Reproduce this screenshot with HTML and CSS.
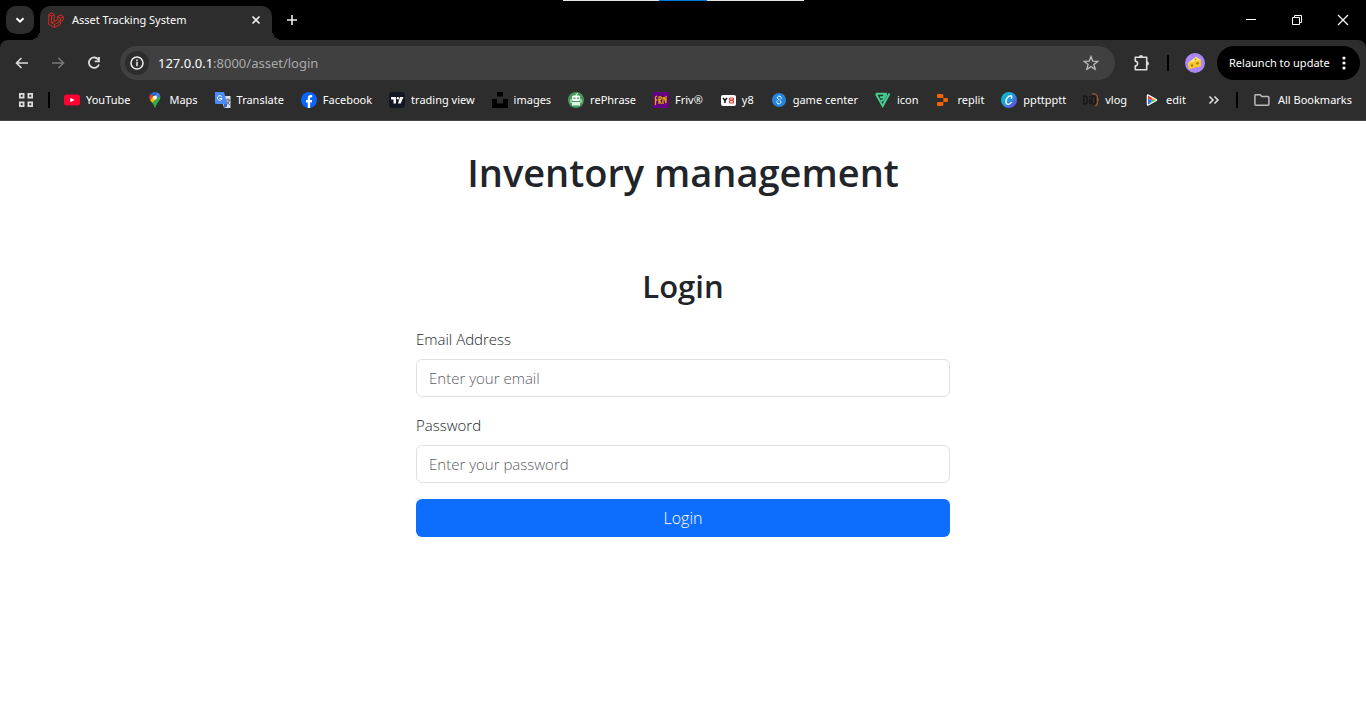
FILE: index.html
```html
<!DOCTYPE html>
<html lang="en">
<head>
<meta charset="utf-8">
<title>Asset Tracking System</title>
<link rel="stylesheet" href="styles.css">
</head>
<body>
<header class="browser">
  <div class="share-bar"></div>
  <div class="tab-strip">
    <button class="tab-search" aria-label="Search tabs"><svg width="12" height="12" viewBox="0 0 12 12"><path d="M2.500 4.200 6 7.600 9.500 4.200" fill="none" stroke="#fff" stroke-width="2"/></svg></button>
    <div class="tab">
      <svg width="16" height="16" viewBox="0 0 16 16" fill="none" stroke="#d32a20" stroke-width="1"><path d="M.7 2.500 3.500.900 6.200 2.500V9.600L9.500 7.800V4.600L12.500 3 15.300 4.600V7.800L12.500 9.400V12.300L6.500 15.500.700 12.300ZM.700 2.500 3.500 4.100 6.200 2.500M3.500 4.100V11L6.500 12.500V15.500M6.500 12.500 12.500 9.400 9.500 7.800M3.500 11 6.200 9.600M9.500 4.600 12.500 6.200 15.300 4.600M12.500 6.200V9.400"/></svg>
      <span class="tab-title">Asset Tracking System</span>
      <button class="plain" aria-label="Close tab"><svg width="16" height="16" viewBox="0 0 16 16"><path d="m4.500 4.500 7 7m0-7-7 7" stroke="#eee" stroke-width="1.700"/></svg></button>
    </div>
    <button class="plain new-tab" aria-label="New tab"><svg width="16" height="16" viewBox="0 0 16 16"><path d="M8 3v10M3 8h10" stroke="#eee" stroke-width="1.600"/></svg></button>
    <div class="window-controls">
      <button class="plain" aria-label="Minimize"><svg width="12" height="12" viewBox="0 0 12 12"><path d="M1 5.500h10" stroke="#fff"/></svg></button>
      <button class="plain" aria-label="Restore"><svg width="12" height="12" viewBox="0 0 12 12" fill="none" stroke="#fff"><path d="M1.500 3.500h7v7h-7zM3.500 3.500v-2h7v7h-2"/></svg></button>
      <button class="plain" aria-label="Close"><svg width="12" height="12" viewBox="0 0 12 12"><path d="m1 1 10 10M11 1 1 11" stroke="#fff" stroke-width="1.200"/></svg></button>
    </div>
  </div>
  <div class="toolbar">
    <div class="nav-buttons">
      <button class="plain" aria-label="Back"><svg width="16" height="16" viewBox="0 0 16 16" fill="none" stroke="#ddd" stroke-width="1.600"><path d="M14 8H3M7.500 3 2.500 8l5 5"/></svg></button>
      <button class="plain" aria-label="Forward"><svg width="16" height="16" viewBox="0 0 16 16" fill="none" stroke="#777" stroke-width="1.600"><path d="M2 8h11M8.500 3l5 5-5 5"/></svg></button>
      <button class="plain" aria-label="Reload"><svg width="16" height="16" viewBox="0 0 16 16" fill="none" stroke="#ddd" stroke-width="1.800"><path d="M12.400 4.700A5.200 5.200 0 1 0 13 9.500"/><path d="M13 2v4.300H8.700" /></svg></button>
    </div>
    <div class="omnibox">
      <button class="site-info" aria-label="Site information"><svg width="16" height="16" viewBox="0 0 16 16"><circle cx="8" cy="8" r="6" fill="none" stroke="#eee" stroke-width="1.500"/><path d="M8 7v4.200M8 4.600v1.600" stroke="#eee" stroke-width="1.500"/></svg></button>
      <div class="url"><span class="host">127.0.0.1</span>:8000/asset/login</div>
      <button class="plain" aria-label="Bookmark this page"><svg width="16" height="16" viewBox="0 0 16 16"><path d="m8 1.500 1.800 4.600 4.900.300-3.800 3.100 1.300 4.800L8 11.600l-4.200 2.700 1.300-4.800L1.300 6.400l4.900-.300z" fill="none" stroke="#bbb" stroke-width="1.300"/></svg></button>
    </div>
    <button class="plain extensions" aria-label="Extensions"><svg width="18" height="18" viewBox="0 0 18 18"><path d="M2.300 3.300h11.400v12.400H2.300v-3.900a2.300 2.300 0 0 0 0-4.600z" fill="none" stroke="#ddd" stroke-width="1.600" stroke-linejoin="round"/><path d="M6 3a2 2 0 0 1 4 0zM14 7.500a2 2 0 0 1 0 4z" fill="#ddd"/></svg></button>
    <span class="divider"></span>
    <button class="plain avatar" aria-label="Profile"><svg width="20" height="20" viewBox="0 0 20 20"><circle cx="10" cy="10" r="10" fill="#ad87fa"/><path d="m3 10 8-6 5 3v6L4 16z" fill="#f8cf34"/><path d="m3 10 8-6 5 3z" fill="#ffe779"/><path d="m3 10 13-3v6L4 16z" fill="#f6c928"/><circle cx="7" cy="12.500" r="1.200" fill="#a87b19"/><circle cx="12.500" cy="10.300" r="1.200" fill="#a87b19"/><circle cx="10.500" cy="6.600" r="1" fill="#c99a22"/></svg></button>
    <button class="relaunch"><span>Relaunch to update</span><svg width="4" height="16" viewBox="0 0 4 16" fill="#fff"><circle cx="2" cy="3" r="1.600"/><circle cx="2" cy="8" r="1.600"/><circle cx="2" cy="13" r="1.600"/></svg></button>
  </div>
  <nav class="bookmarks" aria-label="Bookmarks">
    <button class="plain apps" aria-label="Apps"><svg width="16" height="16" viewBox="0 0 16 16" fill="none" stroke="#ddd" stroke-width="1.800"><path d="M1.900 1.900h3.700v3.700H1.900zM10.400 1.900h3.700v3.700h-3.700zM1.900 10.400h3.700v3.700H1.900zM10.400 10.400h3.700v3.700h-3.700z"/></svg></button>
    <span class="divider"></span>
    <div class="bookmark-list">
      <a href="#"><svg width="16" height="16" viewBox="0 0 16 16"><rect y="2.500" width="16" height="11" rx="2.500" fill="#ff0033"/><path d="m6.300 5.800 4.200 2.200-4.200 2.200z" fill="#fff"/></svg>YouTube</a>
      <a href="#"><svg width="16" height="16" viewBox="0 0 16 16"><path d="M8 0a5.600 5.600 0 0 0-4.300 2L6.200 4.100 9.700.300A5 5 0 0 0 8 0z" fill="#1a73e8"/><path d="M3.700 2A5.500 5.500 0 0 0 3.200 8.300L6.200 4.100z" fill="#ea4335"/><path d="M9.700.3a5.600 5.600 0 0 1 3.300 2.900L9.600 7 8 3z" fill="#4285f4"/><path d="M3.200 8.300 5.300 11 9.900 6.700 6.200 4.100z" fill="#fbbc04"/><path d="M13 3.200c1.800 4.300-2.700 6.300-4.500 12.100-.2.700-.8.700-1 0-.5-1.700-1.200-3-2.200-4.300z" fill="#34a853"/><circle cx="8" cy="5.600" r="2" fill="#fff"/></svg>Maps</a>
      <a href="#"><svg width="16" height="16" viewBox="0 0 16 16"><path d="M6 4h9.500v12H9z" fill="#d9dce1"/><path d="M9 11h3v3.500L9 16z" fill="#3367d6"/><path d="M0 0h9l3.500 12H1a1 1 0 0 1-1-1z" fill="#4b8bf5"/><path d="M6.700 4.700A2.300 2.300 0 1 0 7 6.500H4.700" fill="none" stroke="#fff" stroke-width="1"/><path d="M11 8h4.500M13 6.500V8M14.600 8c-.4 2-1.600 3.500-2.600 4.500M12 9.300c.7 1.500 1.500 2.700 2.900 3.600" fill="none" stroke="#59616b" stroke-width=".9"/></svg>Translate</a>
      <a href="#"><svg width="16" height="16" viewBox="0 0 16 16"><circle cx="8" cy="8" r="8" fill="#0866ff"/><path d="M6.800 16v-5.600H5V7.900h1.800V6.400c0-2.300 1.200-3.300 3-3.300.6 0 1.200.1 1.400.1v2.100h-1c-.9 0-1.100.5-1.100 1.200v1.400h2l-.3 2.500H9.100V16z" fill="#fff"/></svg>Facebook</a>
      <a href="#"><svg width="16" height="16" viewBox="0 0 16 16"><rect width="16" height="16" rx="3" fill="#131722"/><path d="M2 5h5v6.500H4.500V7.500H2zM11 5h3.500l-2.800 6.500H9z" fill="#fff"/><circle cx="8.900" cy="6.200" r="1.200" fill="#fff"/></svg>trading view</a>
      <a href="#"><svg width="16" height="16" viewBox="0 0 16 16"><path d="M5 0h6v4.500H5zM0 7h5v4.500h6V7h5v9H0z" fill="#000"/></svg>images</a>
      <a href="#"><svg width="16" height="16" viewBox="0 0 16 16"><circle cx="8" cy="8" r="8" fill="#439b5a"/><path d="M8 4V2.500l2-1" fill="none" stroke="#fff"/><rect x="4" y="3.500" width="8" height="5.500" rx="1.500" fill="#fff"/><path d="M5.500 5.500h2v1.300h-2zM9 5.500h2v1.300H9z" fill="#34804a"/><path d="M4 10h8v3.500H4z" fill="#dff3e2"/><path d="M3 7v4M13 7v4" stroke="#dff3e2"/></svg>rePhrase</a>
      <a href="#"><svg width="16" height="16" viewBox="0 0 16 16"><path d="M0 0h16v16H0z" fill="#650084"/><path d="M2.500 13V5L4 4M2 8h2.500M6 12V5c3-1.500 3 2.500.3 3.200L8.500 12M10 5v7M11 5l2 6V4" fill="none" stroke="#dcac00" stroke-width="1.300"/></svg>Friv®</a>
      <a href="#"><svg width="16" height="16" viewBox="0 0 16 16"><rect x="1" y="3" width="15" height="11" rx="2" fill="#fff"/><path d="m3 6 2 2.500L7 6M5 8.500V11" fill="none" stroke="#111" stroke-width="1.500"/><rect x="9.500" y="6" width="4" height="2.200" rx="1" fill="none" stroke="#e43121" stroke-width="1.200"/><rect x="9.500" y="8.500" width="4" height="2.500" rx="1" fill="none" stroke="#e43121" stroke-width="1.200"/></svg>y8</a>
      <a href="#"><svg width="16" height="16" viewBox="0 0 16 16"><circle cx="8" cy="8" r="7" fill="#2585df"/><path d="M10 5C8 3.500 6 4.300 6.300 6S10 8 10 10s-2.500 2.500-4 1M6.500 8.300C5 10 6 12 8 11.700M9.600 7.300C11 6 10 4 8 4.200" fill="none" stroke="#d9edff" stroke-width="1"/></svg>game center</a>
      <a href="#"><svg width="16" height="16" viewBox="0 0 16 16" fill="none" stroke="#43cf91" stroke-width="2"><path d="M.8 1.700h9.700L8 5.300H5M1 2l6.700 12 6.800-12.500M6 8.500h2l3.500-6.200"/></svg>icon</a>
      <a href="#"><svg width="16" height="16" viewBox="0 0 16 16" fill="#f26207"><path d="M3 2h4.300a1 1 0 0 1 1 1v3H3a1 1 0 0 1-1-1V3a1 1 0 0 1 1-1zM8.300 6H12a1 1 0 0 1 1 1v2a1 1 0 0 1-1 1H8.300zM3 10h5.300v3a1 1 0 0 1-1 1H3a1 1 0 0 1-1-1v-2a1 1 0 0 1 1-1z"/></svg>replit</a>
      <a href="#"><svg width="16" height="16" viewBox="0 0 16 16"><defs><linearGradient id="canva" x1="0" y1="0" x2="1" y2="1"><stop stop-color="#00c4cc"/><stop offset=".5" stop-color="#249bdc"/><stop offset="1" stop-color="#7d2ae8"/></linearGradient></defs><circle cx="8" cy="8" r="8" fill="url(#canva)"/><path d="M10 6.500c1-.5 1.300-2.700-.4-2.800C7 3.600 4.500 7.500 5 10.400c.6 3 4 2.300 5.600-.4" fill="none" stroke="#fff" stroke-width="1.400"/></svg>ppttpptt</a>
      <a href="#"><svg width="16" height="16" viewBox="0 0 16 16" fill="none" stroke="#111" stroke-width="1.200"><path d="M.8 4v8h1.500C5 12 5 4 2.300 4zM6.700 7v5M6.700 4v1.500M9 4v8h1.500C13.500 12 13.500 4 10.500 4z"/><path d="M9 2c5-.5 6 2 5.300 5.500L15.500 8l-1.200.700C15 12 13.500 14 12 13.800" stroke="#a85b2e"/></svg>vlog</a>
      <a href="#"><svg width="16" height="16" viewBox="0 0 16 16"><path d="M4 3.500v9L12 8z" fill="#fff" stroke="#fff" stroke-width="2.500" stroke-linejoin="round"/><path d="M4 3.500 8 6v2L4 7z" fill="#ee3e36"/><path d="m8 5.800 4 2.200H8z" fill="#ff9e16"/><path d="M4 7l4 1-2 3.400-2 1.100z" fill="#2f6ff2"/><path d="M8 8h4l-6 3.400z" fill="#4dc449"/></svg>edit</a>
    </div>
    <button class="plain overflow" aria-label="More bookmarks"><svg width="12" height="12" viewBox="0 0 12 12"><path d="m1.500 2.500 3.500 3.500-3.500 3.500m5-7L10 6 6.500 9.500" fill="none" stroke="#ddd" stroke-width="1.600"/></svg></button>
    <span class="divider"></span>
    <a href="#"><svg width="16" height="16" viewBox="0 0 16 16"><path d="M1.500 2.700h4.700l1.700 1.800h6a1 1 0 0 1 1 1v6.800a1 1 0 0 1-1 1h-12a1 1 0 0 1-1-1V3.700a1 1 0 0 1 .6-1z" fill="none" stroke="#bbb" stroke-width="1.500"/></svg>All Bookmarks</a>
  </nav>
</header>
<main class="page">
  <h1>Inventory management</h1>
  <form class="login">
    <h2>Login</h2>
    <label for="email">Email Address</label>
    <input id="email" type="email" placeholder="Enter your email">
    <label for="password">Password</label>
    <input id="password" type="password" placeholder="Enter your password">
    <button class="submit" type="button">Login</button>
  </form>
</main>
</body>
</html>
```
FILE: styles.css
```css
* { box-sizing: border-box; }
body { margin: 0; background: #fff; color: #212529; font-family: "Open Sans", "Noto Sans", sans-serif; font-size: 16px; line-height: 24px; }
button, input { font: inherit; }
svg { display: block; flex: none; }

.browser { position: relative; background: #000; color: #fff; font-family: "Noto Sans", sans-serif; font-size: 11px; line-height: 16px; white-space: nowrap; }
.browser a { display: flex; align-items: center; gap: 6px; color: #fff; text-decoration: none; }
.plain { display: flex; align-items: center; justify-content: center; padding: 0; border: 0; background: none; color: inherit; }
.share-bar { position: absolute; top: 0; left: 50%; width: 241px; height: 1px; margin-left: -120px; background: linear-gradient(90deg, #e5e5e5 96px, #0078d7 96px 144px, #e5e5e5 144px); }

.tab-strip { display: flex; height: 40px; padding: 6px 0 0 6px; }
.tab-search { display: flex; align-items: center; justify-content: center; width: 28px; height: 28px; padding: 0; border: 0; border-radius: 10px; background: #2d2d2d; }
.tab { position: relative; display: flex; align-items: center; gap: 8px; width: 232px; margin-left: 6px; padding: 0 8px 6px; border-radius: 10px 10px 0 0; background: #2d2d2d; }
.tab::before, .tab::after { content: ""; position: absolute; bottom: 0; width: 10px; height: 10px; }
.tab::before { left: -10px; background: radial-gradient(circle at 0 0, transparent 10px, #2d2d2d 10px); }
.tab::after { right: -10px; background: radial-gradient(circle at 100% 0, transparent 10px, #2d2d2d 10px); }
.tab-title { flex: 1; }
.new-tab { width: 28px; height: 28px; margin-left: 6px; }
.window-controls { display: flex; margin-left: auto; }
.window-controls button { width: 46px; height: 28px; }

.toolbar { display: flex; align-items: center; height: 40px; padding: 6px 6px 0 14px; border-radius: 8px 8px 0 0; background: #2d2d2d; }
.nav-buttons { display: flex; gap: 20px; }
.omnibox { display: flex; flex: 1; align-items: center; height: 34px; margin-left: 18px; padding: 0 16px 0 5px; border-radius: 17px; background: #404040; }
.site-info { display: flex; align-items: center; justify-content: center; width: 24px; height: 24px; padding: 0; border: 0; border-radius: 50%; background: #2d2d2d; }
.url { flex: 1; margin-left: 9px; color: #aaa; font-size: 13px; }
.host { color: #fff; }
.extensions { margin: 0 16px 0 18px; }
.divider { flex: none; width: 2px; height: 16px; background: #000; }
.avatar { margin: 0 12px 0 16px; }
.relaunch { display: flex; align-items: center; justify-content: space-between; width: 143px; height: 34px; padding: 0 14px 0 12px; border: 0; border-radius: 17px; background: #000; color: #fff; }

.bookmarks { display: flex; align-items: center; height: 41px; padding: 0 14px 0 18px; border-bottom: 1px solid #474747; background: #2d2d2d; }
.apps { margin-right: 14px; }
.bookmark-list { display: flex; flex: 1; justify-content: space-between; margin: 0 22px 0 14px; }
.overflow { margin-right: 16px; }
.bookmarks > a { gap: 8px; margin-left: 16px; }

.page { padding: 27px 16px 24px; }
h1, h2 { margin: 0; font-weight: 600; text-align: center; }
h1 { font-size: 38px; line-height: 48px; }
h2 { margin-bottom: 22px; font-size: 31px; line-height: 38px; }
.login { display: flex; flex-direction: column; max-width: 534px; margin: 71px auto 0; }
.login label { margin-bottom: 8px; font-size: 15px; font-weight: 300; }
.login input { width: 100%; height: 38px; margin-bottom: 16px; padding: 6px 12px; border: 1px solid #dee2e6; border-radius: 6px; background: #fff; color: #212529; font-size: 15px; font-weight: 300; }
.login input::placeholder { color: #595c5f; opacity: 1; }
.submit { height: 38px; padding: 6px 12px; border: 0; border-radius: 6px; background: #0d6efd; color: #fff; font-weight: 300; }
```
